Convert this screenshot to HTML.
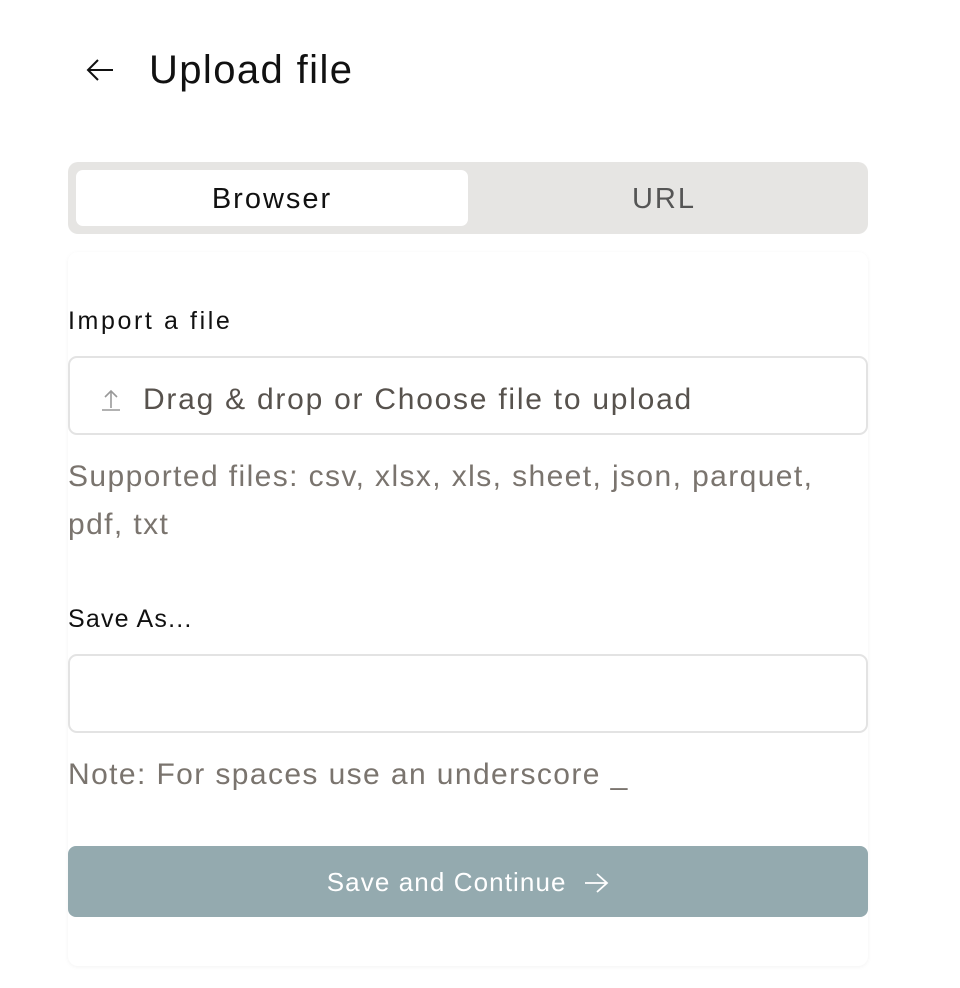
<!DOCTYPE html>
<html><head><meta charset="utf-8"><style>
*{box-sizing:border-box;margin:0;padding:0}
body{width:960px;height:988px;background:#fff;font-family:"Liberation Sans",sans-serif;position:relative;overflow:hidden}
.abs{position:absolute}
.title{left:149px;top:47px;font-size:40px;letter-spacing:1.4px;color:#111;line-height:46px}
.tabs{left:68px;top:162px;width:800px;height:72px;background:#e6e5e3;border-radius:10px}
.tab1{left:8px;top:8px;width:392px;height:56px;background:#fff;border-radius:7px;font-size:29px;letter-spacing:2px;color:#111;text-align:center;line-height:58px}
.tab2{left:400px;top:8px;width:392px;height:56px;font-size:29px;letter-spacing:2px;color:#555;text-align:center;line-height:58px}
.card{left:68px;top:252px;width:800px;height:714px;border-radius:10px;box-shadow:0 1px 4px rgba(0,0,0,0.05)}
.lbl{font-size:25px;letter-spacing:1.6px;color:#111;left:68px}
.inp{left:68px;width:800px;height:79px;border:2px solid #e3e3e3;border-radius:9px}
.muted{font-size:30px;letter-spacing:1.4px;color:#7a746e;left:68px;line-height:48px}
.btn{left:68px;top:846px;width:800px;height:71px;background:#94aaaf;border-radius:8px;color:#fff;font-size:26px;letter-spacing:1.1px;text-align:center;line-height:73px}
</style></head><body>
<svg class="abs" style="left:84px;top:56px" width="32" height="28" viewBox="0 0 32 28"><path d="M29 14H4M14 4L4 14l10 10" fill="none" stroke="#111" stroke-width="2"/></svg>
<div class="abs title">Upload file</div>
<div class="abs tabs"><div class="abs tab1">Browser</div><div class="abs tab2">URL</div></div>
<div class="abs card"></div>
<div class="abs lbl" style="top:307px;letter-spacing:2.6px">Import a file</div>
<div class="abs inp" style="top:356px">
<svg class="abs" style="left:30px;top:30px" width="22" height="24" viewBox="0 0 22 24"><path d="M11 20V3M5 9l6-6 6 6M2 22h18" fill="none" stroke="#999" stroke-width="1.6"/></svg>
<div class="abs" style="left:73px;top:25px;font-size:30px;letter-spacing:1.75px;color:#57524d">Drag &amp; drop or Choose file to upload</div></div>
<div class="abs muted" style="top:453px">Supported files: csv, xlsx, xls, sheet, json, parquet,<br>pdf, txt</div>
<div class="abs lbl" style="top:605px;letter-spacing:1.2px">Save As...</div>
<div class="abs inp" style="top:654px"></div>
<div class="abs muted" style="top:751px">Note: For spaces use an underscore _</div>
<div class="abs btn">Save and Continue&nbsp;&nbsp;<svg width="26" height="22" viewBox="0 0 26 22" style="vertical-align:-3px"><path d="M2 11h22M14 2l10 9-10 9" fill="none" stroke="#fff" stroke-width="1.8"/></svg></div>
</body></html>
